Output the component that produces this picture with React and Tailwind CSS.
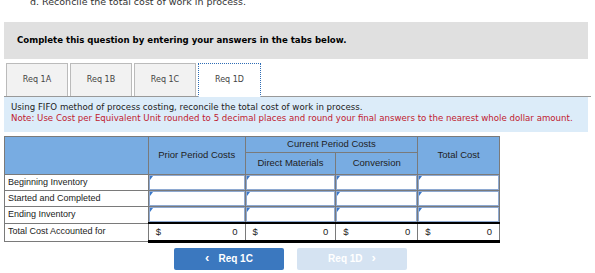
import React from 'react';

const tabs = ['Req 1A', 'Req 1B', 'Req 1C', 'Req 1D'];
const rows = ['Beginning Inventory', 'Started and Completed', 'Ending Inventory'];

const InputCell = () => (
  <td className="border border-[#7a7a7a] bg-white p-0 h-[16px]">
    <div className="relative h-[15px] border border-[#8ea9d1] bg-white">
      <span className="absolute left-0 top-0 w-0 h-0 border-t-[4px] border-r-[3px] border-t-[#3a78c9] border-r-transparent" />
    </div>
  </td>
);

const TotalCell = () => (
  <td className="border-l border-r border-[#7a7a7a] border-t-2 border-t-black border-b-[3px] border-b-black bg-white px-[7px] h-[18px]">
    <div className="flex justify-between text-[9.5px] text-[#222]">
      <span>$</span>
      <span>0</span>
    </div>
  </td>
);

export default function App() {
  return (
    <div className="w-[595px] h-[273px] bg-white overflow-hidden relative" style={{ fontFamily: '"DejaVu Sans", Verdana, sans-serif' }}>
      <div className="h-[14px] -mt-[5px] pl-[30px] text-[9.5px] text-[#333] leading-[14px]">
        d. Reconcile the total cost of work in process.
      </div>

      <div className="mx-[4px] mt-[13px] w-[584px] h-[37px] bg-[#e0e0e0] flex items-center pl-[13px] text-[8.6px] font-bold text-black">
        Complete this question by entering your answers in the tabs below.
      </div>

      <div className="mx-[4px] mt-[4px] flex items-end gap-[2px] pl-[2px] h-[34px] border-b border-[#999]">
        {tabs.map((t, i) =>
          i === 3 ? (
            <div key={t} className="w-[63px] h-[34px] -mb-px bg-white border border-dotted border-[#2f6db5] border-b-white flex items-center justify-center text-[8px] text-[#444]">
              {t}
            </div>
          ) : (
            <div key={t} className="w-[62px] h-[33px] bg-[#f2f2f2] border border-[#bbb] border-b-0 flex items-center justify-center text-[8px] text-[#444]">
              {t}
            </div>
          )
        )}
      </div>

      <div className="mx-[4px] w-[584px] h-[35px] bg-[#dcecf9] pl-[7px] pt-[5px] text-[8.65px] leading-[11px] whitespace-nowrap">
        <div className="text-[#222]">Using FIFO method of process costing, reconcile the total cost of work in process.</div>
        <div className="text-[#c0202f]">Note: Use Cost per Equivalent Unit rounded to 5 decimal places and round your final answers to the nearest whole dollar amount.</div>
      </div>

      <table className="ml-[4px] mt-[4px] border-collapse w-[496px]" style={{ fontFamily: '"Liberation Sans", Arial, sans-serif' }}>
        <colgroup>
          <col className="w-[144px]" />
          <col className="w-[97px]" />
          <col className="w-[91px]" />
          <col className="w-[82px]" />
          <col className="w-[82px]" />
        </colgroup>
        <thead>
          <tr className="h-[16px]">
            <th rowSpan={2} className="border border-[#7a7a7a] bg-[#78ace2]" />
            <th rowSpan={2} className="border border-[#7a7a7a] bg-[#78ace2] text-[9.5px] font-normal text-[#222]">Prior Period Costs</th>
            <th colSpan={2} className="border border-[#7a7a7a] bg-[#78ace2] text-[9.5px] font-normal text-[#222] h-[16px]">Current Period Costs</th>
            <th rowSpan={2} className="border border-[#7a7a7a] bg-[#78ace2] text-[9.5px] font-normal text-[#222]">Total Cost</th>
          </tr>
          <tr className="h-[22px]">
            <th className="border border-[#7a7a7a] bg-[#78ace2] text-[9.5px] font-normal text-[#222]">Direct Materials</th>
            <th className="border border-[#7a7a7a] bg-[#78ace2] text-[9.5px] font-normal text-[#222]">Conversion</th>
          </tr>
        </thead>
        <tbody>
          {rows.map((r) => (
            <tr key={r} className="h-[16px]">
              <td className="border border-[#7a7a7a] bg-white px-[3px] text-[9px] text-[#222] whitespace-nowrap">{r}</td>
              <InputCell />
              <InputCell />
              <InputCell />
              <InputCell />
            </tr>
          ))}
          <tr>
            <td className="border border-[#7a7a7a] bg-white px-[3px] text-[9px] text-[#222] whitespace-nowrap">Total Cost Accounted for</td>
            <TotalCell />
            <TotalCell />
            <TotalCell />
            <TotalCell />
          </tr>
        </tbody>
      </table>

      <div className="flex gap-[13px] ml-[174px] mt-[5px]" style={{ fontFamily: '"Liberation Sans", Arial, sans-serif' }}>
        <button className="w-[110px] h-[22px] bg-[#3b78bf] rounded-[2px] text-white text-[10px] font-bold flex items-center justify-center gap-[9px]">
          <span className="text-[13px] leading-none -mt-[2px]">‹</span>
          <span>Req 1C</span>
        </button>
        <button className="w-[110px] h-[22px] bg-[#d5e3f2] rounded-[2px] text-white text-[10px] font-bold flex items-center justify-center gap-[9px]">
          <span>Req 1D</span>
          <span className="text-[13px] leading-none -mt-[2px]">›</span>
        </button>
      </div>
    </div>
  );
}
